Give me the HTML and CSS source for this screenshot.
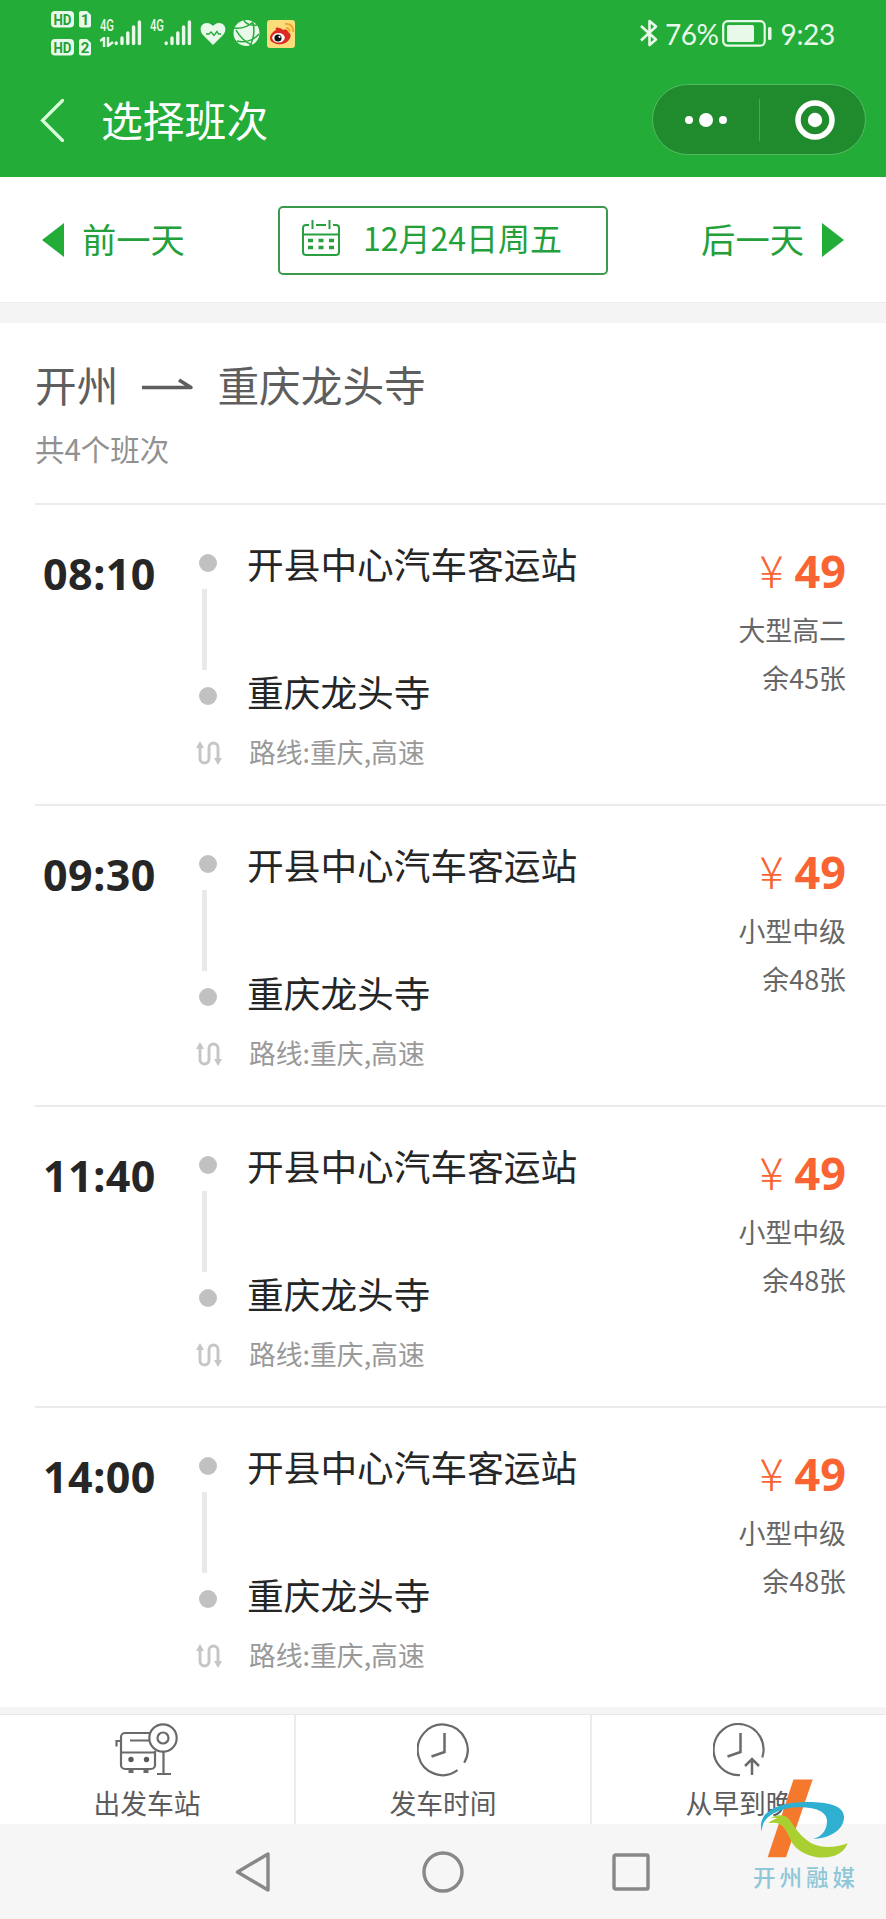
FILE: index.html
```
<!DOCTYPE html>
<html lang="zh-CN">
<head>
    <meta charset="UTF-8">
    <meta name="viewport" content="width=device-width, initial-scale=1.0">
    <title>选择班次</title>
    <link rel="stylesheet" href="styles.css">
</head>
<body>
    <!-- shared icons -->
    <svg class="defs" width="0" height="0">
        <symbol id="icon-route" viewBox="0 0 26 26">
            <path d="M4 5v13.500a4.500 4.500 0 0 0 9 0V7.500a4.500 4.500 0 0 1 9 0V20" fill="none" stroke="#c6c6c6" stroke-width="2.900"/>
            <path d="M0 8l4-7 4 7zM18 18h8l-4 7z" fill="#c6c6c6"/>
        </symbol>
        <symbol id="icon-signal" viewBox="0 0 28 26">
            <path d="M2.200 23v.5M8 18v5.500M13.800 13v10.500M19.600 7v16.500M25.400 2v21.500" fill="none" stroke="#e9f9e9" stroke-width="3.400" stroke-linecap="round"/>
        </symbol>
    </svg>

    <div class="header">
        <div class="status">
            <svg class="hd" width="41" height="46" viewBox="0 0 41 46">
                <g fill="#e9f9e9">
                    <rect x="0" y="0" width="23" height="16.500" rx="4"/>
                    <path d="M30 0h6l4 4v10.500a2 2 0 0 1-2 2h-8a2 2 0 0 1-2-2V2a2 2 0 0 1 2-2z"/>
                    <rect x="0" y="28" width="23" height="16.500" rx="4"/>
                    <path d="M30 28h6l4 4v10.500a2 2 0 0 1-2 2h-8a2 2 0 0 1-2-2V30a2 2 0 0 1 2-2z"/>
                </g>
                <g class="hd-text">
                    <text x="11.500" y="13.700" textLength="18" lengthAdjust="spacingAndGlyphs">HD</text>
                    <text x="34" y="13.700">1</text>
                    <text x="11.500" y="41.700" textLength="18" lengthAdjust="spacingAndGlyphs">HD</text>
                    <text x="34" y="41.700">2</text>
                </g>
            </svg>
            <div class="net">
                <span>4G</span>
                <svg width="14" height="10" viewBox="0 0 14 10"><path d="M0 4l4-3v9M8 0v9l5-4" fill="none" stroke="#e9f9e9" stroke-width="2.400"/></svg>
            </div>
            <svg class="signal" width="28" height="26"><use href="#icon-signal"/></svg>
            <div class="net net-second"><span>4G</span></div>
            <svg class="signal" width="28" height="26"><use href="#icon-signal"/></svg>
            <svg class="heart" width="26" height="24" viewBox="0 0 26 24">
                <path d="M13 23L3 13C-1 9 0 1 7 1c3 0 5 2 6 3 1-1 3-3 6-3 7 0 8 8 4 12z" fill="#e9f9e9"/>
                <path d="M6 12h3l2-2 3 3.500 3-4 1.500 2.500H21" fill="none" stroke="#23ac38" stroke-width="1.300"/>
            </svg>
            <svg class="globe" width="27" height="28" viewBox="0 0 27 28">
                <circle cx="13.500" cy="14" r="13" fill="#e9f9e9"/>
                <path d="M11 1c1 4 8 6 13 5M0 9c8 1 15-1 20-6M3 11c3 6 10 13 16 15M20 4c2 8 1 15-3 23M26 15c-6 7-15 9-22 7" fill="none" stroke="#23ac38" stroke-width="1.500"/>
            </svg>
            <svg class="weibo" width="30" height="30" viewBox="0 0 30 30">
                <rect x="1" y="1" width="28" height="28" rx="3" fill="#fbdc7a"/>
                <path d="M4 19c0-4 4-7 6-8-1-2 0-3 3-2 2 0 3 1 4 2 3-1 5 0 5 2 4 2 3 6 0 9-4 4-10 4-14 2-3-1-4-3-4-5z" fill="#dd2a20"/>
                <ellipse cx="12.500" cy="18.800" rx="6.300" ry="4.800" fill="#fff"/>
                <circle cx="12" cy="19" r="3.600" fill="#111"/>
                <circle cx="13.500" cy="17.800" r="1.100" fill="#fff"/>
                <path d="M19 5c5-1 9 3 8 8M20 9c3 0 4 2 3 4" fill="none" stroke="#f2a326" stroke-width="1.800"/>
            </svg>
            <div class="status-right">
                <svg class="bluetooth" width="18" height="28" viewBox="0 0 18 28">
                    <path d="M1 7L16 20.500l-6.500 5.500V2L16 7.500 1 21.500" fill="none" stroke="#e9f9e9" stroke-width="2.600" stroke-linejoin="round"/>
                </svg>
                <span class="percent">76%</span>
                <svg class="battery" width="50" height="27" viewBox="0 0 50 27">
                    <rect x="1.200" y="1.200" width="41.500" height="24.500" rx="4.500" fill="none" stroke="#e9f9e9" stroke-width="2.200"/>
                    <rect x="5" y="5" width="27" height="17" rx="1.500" fill="#e9f9e9"/>
                    <rect x="46" y="7" width="3.500" height="13" rx="1.500" fill="#e9f9e9"/>
                </svg>
                <span class="clock">9:23</span>
            </div>
        </div>

        <div class="titlebar">
            <svg class="back" width="26" height="44" viewBox="0 0 26 44">
                <path d="M22.500 2.500L2.500 22.500l20 20" fill="none" stroke="#d9fbd9" stroke-width="3.200" stroke-linecap="round"/>
            </svg>
            <h1>选择班次</h1>
            <div class="capsule">
                <svg width="42" height="14" viewBox="0 0 42 14" fill="#fff">
                    <circle cx="4" cy="7" r="4"/><circle cx="21" cy="7" r="7"/><circle cx="38" cy="7" r="4"/>
                </svg>
                <span class="capsule-line"></span>
                <svg width="40" height="40" viewBox="0 0 40 40">
                    <circle cx="20" cy="20" r="17" fill="none" stroke="#fff" stroke-width="5.500"/>
                    <circle cx="20" cy="20" r="7.200" fill="#fff"/>
                </svg>
            </div>
        </div>
    </div>

    <div class="days">
        <a class="day" href="#">
            <svg width="22" height="34" viewBox="0 0 22 34"><path d="M22 0v34L0 17z" fill="#23ac38"/></svg>
            <span>前一天</span>
        </a>
        <div class="date">
            <svg width="38" height="36" viewBox="0 0 38 36" fill="none" stroke="#2a9f40" stroke-width="2">
                <path d="M7 5H4a3 3 0 0 0-3 3v24a3 3 0 0 0 3 3h30a3 3 0 0 0 3-3V8a3 3 0 0 0-3-3h-3M14 5h10M1 14.500h36M10.500 0v9M27.500 0v9"/>
                <path d="M6 20.500h5M16.500 20.500h5M27 20.500h5M6 27.500h5M16.500 27.500h5M27 27.500h5" stroke-width="3.600"/>
            </svg>
            <span>12月24日周五</span>
        </div>
        <a class="day" href="#">
            <span>后一天</span>
            <svg width="22" height="34" viewBox="0 0 22 34"><path d="M0 0v34l22-17z" fill="#23ac38"/></svg>
        </a>
    </div>

    <div class="route">
        <div class="route-name">
            <span>开州</span>
            <svg width="52" height="14" viewBox="0 0 52 14"><path d="M1 10.500h49L38 3" fill="none" stroke="#5e5e5e" stroke-width="3.600" stroke-linejoin="round"/></svg>
            <span>重庆龙头寺</span>
        </div>
        <p>共4个班次</p>
    </div>

    <div class="list">
        <div class="item">
            <div class="time">08:10</div>
            <div class="track">
                <i class="dot"></i><i class="line"></i><i class="dot"></i>
                <svg width="26" height="26"><use href="#icon-route"/></svg>
            </div>
            <div class="stations">
                <div class="from">开县中心汽车客运站</div>
                <div class="to">重庆龙头寺</div>
                <div class="via">路线:重庆,高速</div>
            </div>
            <div class="info">
                <div class="price"><span>¥</span><b>49</b></div>
                <div class="type">大型高二</div>
                <div class="left">余45张</div>
            </div>
        </div>
        <div class="item">
            <div class="time">09:30</div>
            <div class="track">
                <i class="dot"></i><i class="line"></i><i class="dot"></i>
                <svg width="26" height="26"><use href="#icon-route"/></svg>
            </div>
            <div class="stations">
                <div class="from">开县中心汽车客运站</div>
                <div class="to">重庆龙头寺</div>
                <div class="via">路线:重庆,高速</div>
            </div>
            <div class="info">
                <div class="price"><span>¥</span><b>49</b></div>
                <div class="type">小型中级</div>
                <div class="left">余48张</div>
            </div>
        </div>
        <div class="item">
            <div class="time">11:40</div>
            <div class="track">
                <i class="dot"></i><i class="line"></i><i class="dot"></i>
                <svg width="26" height="26"><use href="#icon-route"/></svg>
            </div>
            <div class="stations">
                <div class="from">开县中心汽车客运站</div>
                <div class="to">重庆龙头寺</div>
                <div class="via">路线:重庆,高速</div>
            </div>
            <div class="info">
                <div class="price"><span>¥</span><b>49</b></div>
                <div class="type">小型中级</div>
                <div class="left">余48张</div>
            </div>
        </div>
        <div class="item">
            <div class="time">14:00</div>
            <div class="track">
                <i class="dot"></i><i class="line"></i><i class="dot"></i>
                <svg width="26" height="26"><use href="#icon-route"/></svg>
            </div>
            <div class="stations">
                <div class="from">开县中心汽车客运站</div>
                <div class="to">重庆龙头寺</div>
                <div class="via">路线:重庆,高速</div>
            </div>
            <div class="info">
                <div class="price"><span>¥</span><b>49</b></div>
                <div class="type">小型中级</div>
                <div class="left">余48张</div>
            </div>
        </div>
    </div>

    <div class="tabs">
        <div class="tab">
            <svg width="64" height="54" viewBox="0 0 64 54" fill="none" stroke="#6a6a6a" stroke-width="2.200">
                <path d="M35 10H10a4 4 0 0 0-4 4v28a4 4 0 0 0 4 4h26a4 4 0 0 0 4-4V28M6 29.500h34M15 17.500h19M6 18H1.500v5.500"/>
                <circle cx="48" cy="15" r="13.700"/>
                <circle cx="48" cy="15" r="5.500"/>
                <path d="M48.500 29v22M42 51h14"/>
                <path d="M13.500 48h5M28.500 48h5" stroke-width="4"/>
                <circle cx="16" cy="36.500" r="2.700" fill="#5a5a5a" stroke="none"/>
                <circle cx="31.500" cy="36.500" r="2.700" fill="#5a5a5a" stroke="none"/>
            </svg>
            <span>出发车站</span>
        </div>
        <div class="tab">
            <svg width="52" height="54" viewBox="0 0 52 54" fill="none" stroke="#6a6a6a" stroke-width="2.200">
                <path d="M40.500 47.200A25 25.300 0 1 1 47.200 39.700"/>
                <path d="M27.500 10v19l-13 4.500" stroke-width="2.500"/>
            </svg>
            <span>发车时间</span>
        </div>
        <div class="tab">
            <svg width="52" height="54" viewBox="0 0 52 54" fill="none" stroke="#6a6a6a" stroke-width="2.200">
                <path d="M27 52A25 25.500 0 1 1 49.300 34.500"/>
                <path d="M27.500 10v19l-13 4.500M39 52V37M32 43l7-7 7 7" stroke-width="2.500"/>
            </svg>
            <span>从早到晚</span>
        </div>
    </div>

    <div class="sysnav">
        <svg width="36" height="42" viewBox="0 0 36 42"><path d="M33 3v36L2.500 21z" fill="none" stroke="#888" stroke-width="3.400" stroke-linejoin="round"/></svg>
        <svg width="42" height="42" viewBox="0 0 42 42"><circle cx="21" cy="21" r="19" fill="none" stroke="#888" stroke-width="3.400"/></svg>
        <svg width="38" height="38" viewBox="0 0 38 38"><rect x="2" y="2" width="34" height="34" rx="1.500" fill="none" stroke="#888" stroke-width="3.400"/></svg>
    </div>

    <div class="watermark">
        <svg width="92" height="81" viewBox="0 0 92 81">
            <path d="M35.500 1.500h19.200L28 79.300H9.700z" fill="#f4792c"/>
            <path d="M4 54C-2 36 18 25 42 24.300c24-1 44 2 44 15C86 53 69 61 55 61c8-2 14-8 14-18 0-12-18-15-34-13.500C17 32 3 40 4 54z" fill="#2fb0d0"/>
            <path d="M10.300 45.300c3-3 6-4 9-5-3-1-5-.5-7 .5 4-4 12-5 17.400-1C35 45 40 58 55 66c11 5 24 3 34.700-.7-3 7-8 11-15 13-12 3-25 1-36-8-7-6-8-16-14-22-4-4-9-4-14.400-3z" fill="#a9d030"/>
        </svg>
        <span>开州融媒</span>
    </div>
</body>
</html>
```
FILE: styles.css
```
body {
    margin: 0;
    position: relative;
    width: 886px;
    height: 1919px;
    font-family: "Noto Sans CJK SC", sans-serif;
    background-color: #f4f4f4;
    overflow: hidden;
}
h1, p {
    margin: 0;
    font-weight: normal;
}
svg {
    display: block;
    flex: none;
}
.defs {
    position: absolute;
}
.header {
    height: 177px;
    background-color: #23ac38;
    color: #fff;
}

/* status bar */
.status {
    display: flex;
    align-items: flex-start;
    height: 73px;
    padding: 11px 51px 0 51px;
    box-sizing: border-box;
}
.hd-text {
    font: bold 15px "Roboto", sans-serif;
    fill: #23a035;
    text-anchor: middle;
}
.net {
    width: 14px;
    margin: 9px 0 0 8px;
    font: 500 16px/12px "Roboto", sans-serif;
    color: #e9f9e9;
}
.net span {
    display: block;
    transform: scaleX(0.7);
    transform-origin: left;
}
.net svg {
    margin-top: 5px;
}
.net-second {
    margin-left: 9px;
}
.signal {
    margin-top: 9px;
    margin-right: -1px;
}
.heart {
    margin: 11px 0 0 9px;
}
.globe {
    margin: 8px 0 0 7px;
}
.weibo {
    margin: 8px 0 0 6px;
}
.status-right {
    display: flex;
    align-items: center;
    height: 28px;
    margin: 8px 0 0 auto;
    font-size: 28px;
    font-family: "Lato", sans-serif;
    color: #e9f9e9;
}
.percent {
    margin: 2px 4px 0 7px;
    letter-spacing: -0.500px;
}
.clock {
    margin: 2px 0 0 8px;
    letter-spacing: -0.300px;
}

/* title */
.titlebar {
    display: flex;
    align-items: center;
    height: 94px;
    padding: 0 20px 0 40px;
}
.titlebar h1 {
    margin: -3px 0 0 35px;
    font-size: 41.800px;
    line-height: 60px;
}
.capsule {
    display: flex;
    align-items: center;
    width: 214px;
    height: 71px;
    margin: -1px 0 0 auto;
    padding: 0 29px 0 32px;
    box-sizing: border-box;
    border: 1.500px solid #55bb62;
    border-radius: 36px;
    background-color: #1f8b2d;
}
.capsule-line {
    width: 1px;
    height: 42px;
    margin: 0 35px 0 32px;
    background-color: #4ca557;
}

/* day switch */
.days {
    display: flex;
    justify-content: space-between;
    align-items: center;
    height: 126px;
    padding: 1px 42px 0;
    background-color: #fff;
    box-sizing: border-box;
    border-bottom: 1px solid #ececec;
}
.day {
    display: flex;
    align-items: center;
    gap: 18px;
    font-size: 34.300px;
    line-height: 50px;
    color: #23a03a;
    text-decoration: none;
}
.day span {
    margin-top: -4px;
}
.date {
    display: flex;
    align-items: center;
    width: 330px;
    height: 69px;
    padding-left: 22px;
    box-sizing: border-box;
    border: 2px solid #3b9a4c;
    border-radius: 5px;
    font-size: 32px;
    color: #23a03a;
}
.date svg {
    margin-top: -4px;
}
.date span {
    margin: -6px 0 0 23px;
}

/* route heading */
.route {
    height: 180px;
    margin-top: 20px;
    padding: 32px 0 0 35px;
    box-sizing: border-box;
    background-color: #fff;
}
.route-name {
    display: flex;
    align-items: center;
    font-size: 41.700px;
    line-height: 58px;
    color: #5e5e5e;
}
.route-name svg {
    margin: 0 24px 0 23px;
}
.route p {
    margin-top: 15px;
    font-size: 29.500px;
    line-height: 40px;
    color: #919191;
}

/* bus list */
.list {
    padding-left: 35px;
    background-color: #fff;
}
.item {
    display: flex;
    height: 301px;
    box-sizing: border-box;
    border-top: 2px solid #ebebeb;
}
.time {
    width: 151px;
    padding: 39px 0 0 8px;
    box-sizing: border-box;
    font: bold 43px/60px "Noto Sans", sans-serif;
    letter-spacing: 0.500px;
    color: #262626;
}
.track {
    width: 61px;
    padding: 49px 0 0 10px;
    box-sizing: border-box;
}
.track .dot {
    display: block;
    width: 18px;
    height: 18px;
    margin-left: 3px;
    border-radius: 50%;
    background-color: #c1c1c1;
}
.track .line {
    display: block;
    width: 5px;
    height: 81px;
    margin: 17px 0 17px 6px;
    background-color: #e9e9e9;
}
.track svg {
    margin-top: 35px;
}
.stations {
    flex: 1;
    padding-top: 33px;
    color: #262626;
}
.from, .to {
    font-size: 36.700px;
    line-height: 50px;
}
.to {
    margin-top: 78px;
}
.via {
    margin-top: 16px;
    padding-left: 2px;
    font-size: 26.800px;
    line-height: 40px;
    color: #999;
}
.info {
    padding: 36px 40px 0 0;
    text-align: right;
    font-size: 26.900px;
    color: #666;
}
.price {
    display: flex;
    justify-content: flex-end;
    height: 60px;
    font-size: 45px;
    line-height: 60px;
    color: #fa6432;
}
.price span {
    margin: -2px 11px 0 0;
    font-weight: 300;
}
.price b {
    font-family: "Noto Sans", sans-serif;
}
.type {
    margin-top: 9px;
    line-height: 40px;
}
.left {
    margin-top: 8px;
    line-height: 40px;
}

/* bottom tabs */
.tabs {
    display: flex;
    height: 109px;
    margin-top: 7px;
    background-color: #fff;
    border-top: 1px solid #e8e8e8;
}
.tab {
    display: flex;
    flex: 1;
    flex-direction: column;
    align-items: center;
    padding-top: 8px;
    box-sizing: border-box;
    font-size: 26.800px;
    line-height: 40px;
    color: #5c5c5c;
}
.tab + .tab {
    border-left: 2px solid #ececec;
}
.tab span {
    margin-top: 6px;
}
.sysnav {
    display: flex;
    align-items: center;
    height: 95px;
    padding-left: 235px;
    background-color: #f6f6f6;
}
.sysnav svg + svg {
    margin-left: 151px;
}
.sysnav svg:last-child {
    margin-left: 148px;
}

.watermark {
    position: absolute;
    left: 753px;
    top: 1778px;
    width: 110px;
}
.watermark svg {
    margin-left: 5px;
}
.watermark span {
    display: block;
    margin-top: 2px;
    font-size: 22.500px;
    font-weight: 500;
    line-height: 30px;
    letter-spacing: 4px;
    white-space: nowrap;
    color: #8ec7d8;
}
```
